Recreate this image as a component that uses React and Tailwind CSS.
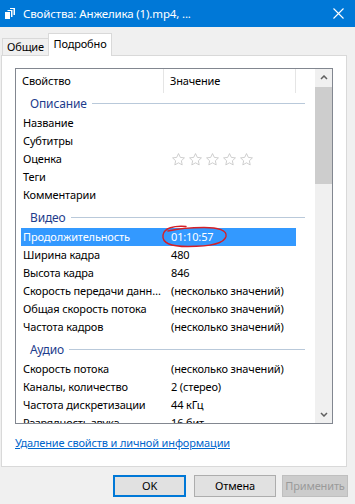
import React from 'react';

const items = [
  { group: 'Описание', first: true },
  { name: 'Название', value: '' },
  { name: 'Субтитры', value: '' },
  { name: 'Оценка', stars: true },
  { name: 'Теги', value: '' },
  { name: 'Комментарии', value: '' },
  { group: 'Видео' },
  { name: 'Продолжительность', value: '01:10:57', selected: true },
  { name: 'Ширина кадра', value: '480' },
  { name: 'Высота кадра', value: '846' },
  { name: 'Скорость передачи данных', value: '(несколько значений)' },
  { name: 'Общая скорость потока', value: '(несколько значений)' },
  { name: 'Частота кадров', value: '(несколько значений)' },
  { group: 'Аудио' },
  { name: 'Скорость потока', value: '(несколько значений)' },
  { name: 'Каналы, количество', value: '2 (стерео)' },
  { name: 'Частота дискретизации', value: '44 кГц' },
  { name: 'Разрядность звука', value: '16 бит' },
];

const Star = () => (
  <svg width="15" height="15" viewBox="0 0 24 24" className="mr-[2px]">
    <path
      d="M12 2.5l2.9 6.1 6.6.8-4.9 4.6 1.3 6.6L12 17.3l-5.9 3.3 1.3-6.6-4.9-4.6 6.6-.8z"
      fill="none"
      stroke="#c4c4c4"
      strokeWidth="1.3"
      strokeLinejoin="round"
    />
  </svg>
);

const Chevron = ({ down }) => (
  <svg width="8" height="5" viewBox="0 0 8 5">
    <path
      d={down ? 'M1 1l3 3 3-3' : 'M1 4l3-3 3 3'}
      fill="none"
      stroke="#606060"
      strokeWidth="1.5"
    />
  </svg>
);

const GroupRow = ({ label, first }) => (
  <div
    className={`flex items-center pl-[14px] pr-[10px] ${
      first ? 'h-[21px]' : 'h-[24px] pt-[3px]'
    }`}
  >
    <span className="text-[12px] text-[#1e3c8c]">{label}</span>
    <div className="ml-[5px] h-px flex-1 bg-[#b9c9da]" />
  </div>
);

const PropRow = ({ item }) => (
  <div className="flex h-[18px] items-center">
    <div
      className={`ml-[5px] flex h-full w-[275px] items-center whitespace-nowrap ${
        item.selected ? 'bg-[#3399ff] text-white' : 'text-black'
      }`}
    >
      <span className="w-[143px] truncate pl-[2px] pr-[2px]">{item.name}</span>
      {item.stars ? (
        <span className="flex items-center pl-[7px]">
          <Star />
          <Star />
          <Star />
          <Star />
          <Star />
        </span>
      ) : (
        <span className="pl-[7px]">{item.value}</span>
      )}
    </div>
  </div>
);

export default function App() {
  return (
    <div className="relative h-[504px] w-[355px] overflow-hidden bg-[#f0f0f0] font-['Noto_Sans',sans-serif] text-[11px] leading-[16px] tracking-[-0.15px]">
      {/* ===== TITLE BAR ===== */}
      <div className="flex h-[27px] items-center bg-[#0078d7] text-[11.5px] text-white">
        <svg width="12" height="13" viewBox="0 0 12 13" className="ml-[4px]">
          <rect x="5.5" y="0.5" width="6" height="8" fill="#fff" stroke="#0078d7" />
          <rect x="3" y="2.5" width="6" height="8" fill="#fff" stroke="#0078d7" />
          <rect x="0.5" y="4.5" width="6" height="8" fill="#fff" stroke="#0078d7" />
        </svg>
        <span className="ml-[7px]">Свойства: Анжелика (1).mp4, ...</span>
        <svg width="11" height="11" viewBox="0 0 11 11" className="ml-auto mr-[11px]">
          <path d="M0.5 0.5l10 10M10.5 0.5l-10 10" stroke="#fff" strokeWidth="1.1" />
        </svg>
      </div>

      {/* ===== TABS ===== */}
      <div className="flex h-[28px] items-end pl-[2px]">
        <div className="flex h-[17px] w-[47px] items-center justify-center border border-b-0 border-[#d9d9d9] bg-[#f0f0f0]">
          Общие
        </div>
        <div className="relative z-10 -mb-px -ml-px flex h-[23px] w-[64px] items-start justify-center border border-b-0 border-[#d9d9d9] bg-white pt-[2px]">
          Подробно
        </div>
      </div>

      {/* ===== PANEL ===== */}
      <div className="ml-[1px] h-[412px] w-[346px] border border-[#d9d9d9] bg-white pl-[13px] pt-[12px]">
        <div className="flex h-[356px] w-[318px] border border-[#828790] bg-white">
          <div className="flex-1 overflow-hidden">
            <div className="flex h-[24px] items-center">
              <div className="flex h-full w-[148px] items-center border-r border-[#e5e5e5] pl-[6px]">
                Свойство
              </div>
              <div className="flex h-full w-[132px] items-center border-r border-[#e5e5e5] pl-[6px]">
                Значение
              </div>
            </div>
            {items.map((item, i) =>
              item.group ? (
                <GroupRow key={i} label={item.group} first={item.first} />
              ) : (
                <PropRow key={i} item={item} />
              )
            )}
          </div>

          {/* ===== SCROLLBAR ===== */}
          <div className="flex w-[17px] flex-col bg-[#f0f0f0]">
            <div className="flex h-[17px] items-center justify-center">
              <Chevron />
            </div>
            <div className="mt-px h-[97px] bg-[#cdcdcd]" />
            <div className="flex-1" />
            <div className="flex h-[17px] items-center justify-center">
              <Chevron down />
            </div>
          </div>
        </div>

        <div className="mt-[11px] text-[#0066cc] underline">
          Удаление свойств и личной информации
        </div>
      </div>

      {/* ===== BUTTONS ===== */}
      <div className="mt-[8px] flex pl-[113px]">
        <button className="h-[22px] w-[73px] border-2 border-[#0078d7] bg-[#e1e1e1]">
          OK
        </button>
        <button className="ml-[8px] h-[22px] w-[82px] border border-[#adadad] bg-[#e1e1e1]">
          Отмена
        </button>
        <button className="ml-[6px] h-[22px] w-[66px] border border-[#bfbfbf] bg-[#cccccc] text-[#9a9a9a]">
          Применить
        </button>
      </div>

      {/* red hand-drawn mark */}
      <svg
        className="pointer-events-none absolute left-[159px] top-[223px]"
        width="74"
        height="27"
        viewBox="0 0 74 27"
      >
        <path
          d="M27 3.5 C15 2.5 5 5 4 12 C3 20 11 23.5 29 23.5 C49 23.5 65 21 67 13.5 C68.5 7 59 4.5 45 4.5 C34 4.5 22 5 9 8"
          fill="none"
          stroke="#d51f26"
          strokeWidth="1.4"
          strokeLinecap="round"
        />
      </svg>
    </div>
  );
}
